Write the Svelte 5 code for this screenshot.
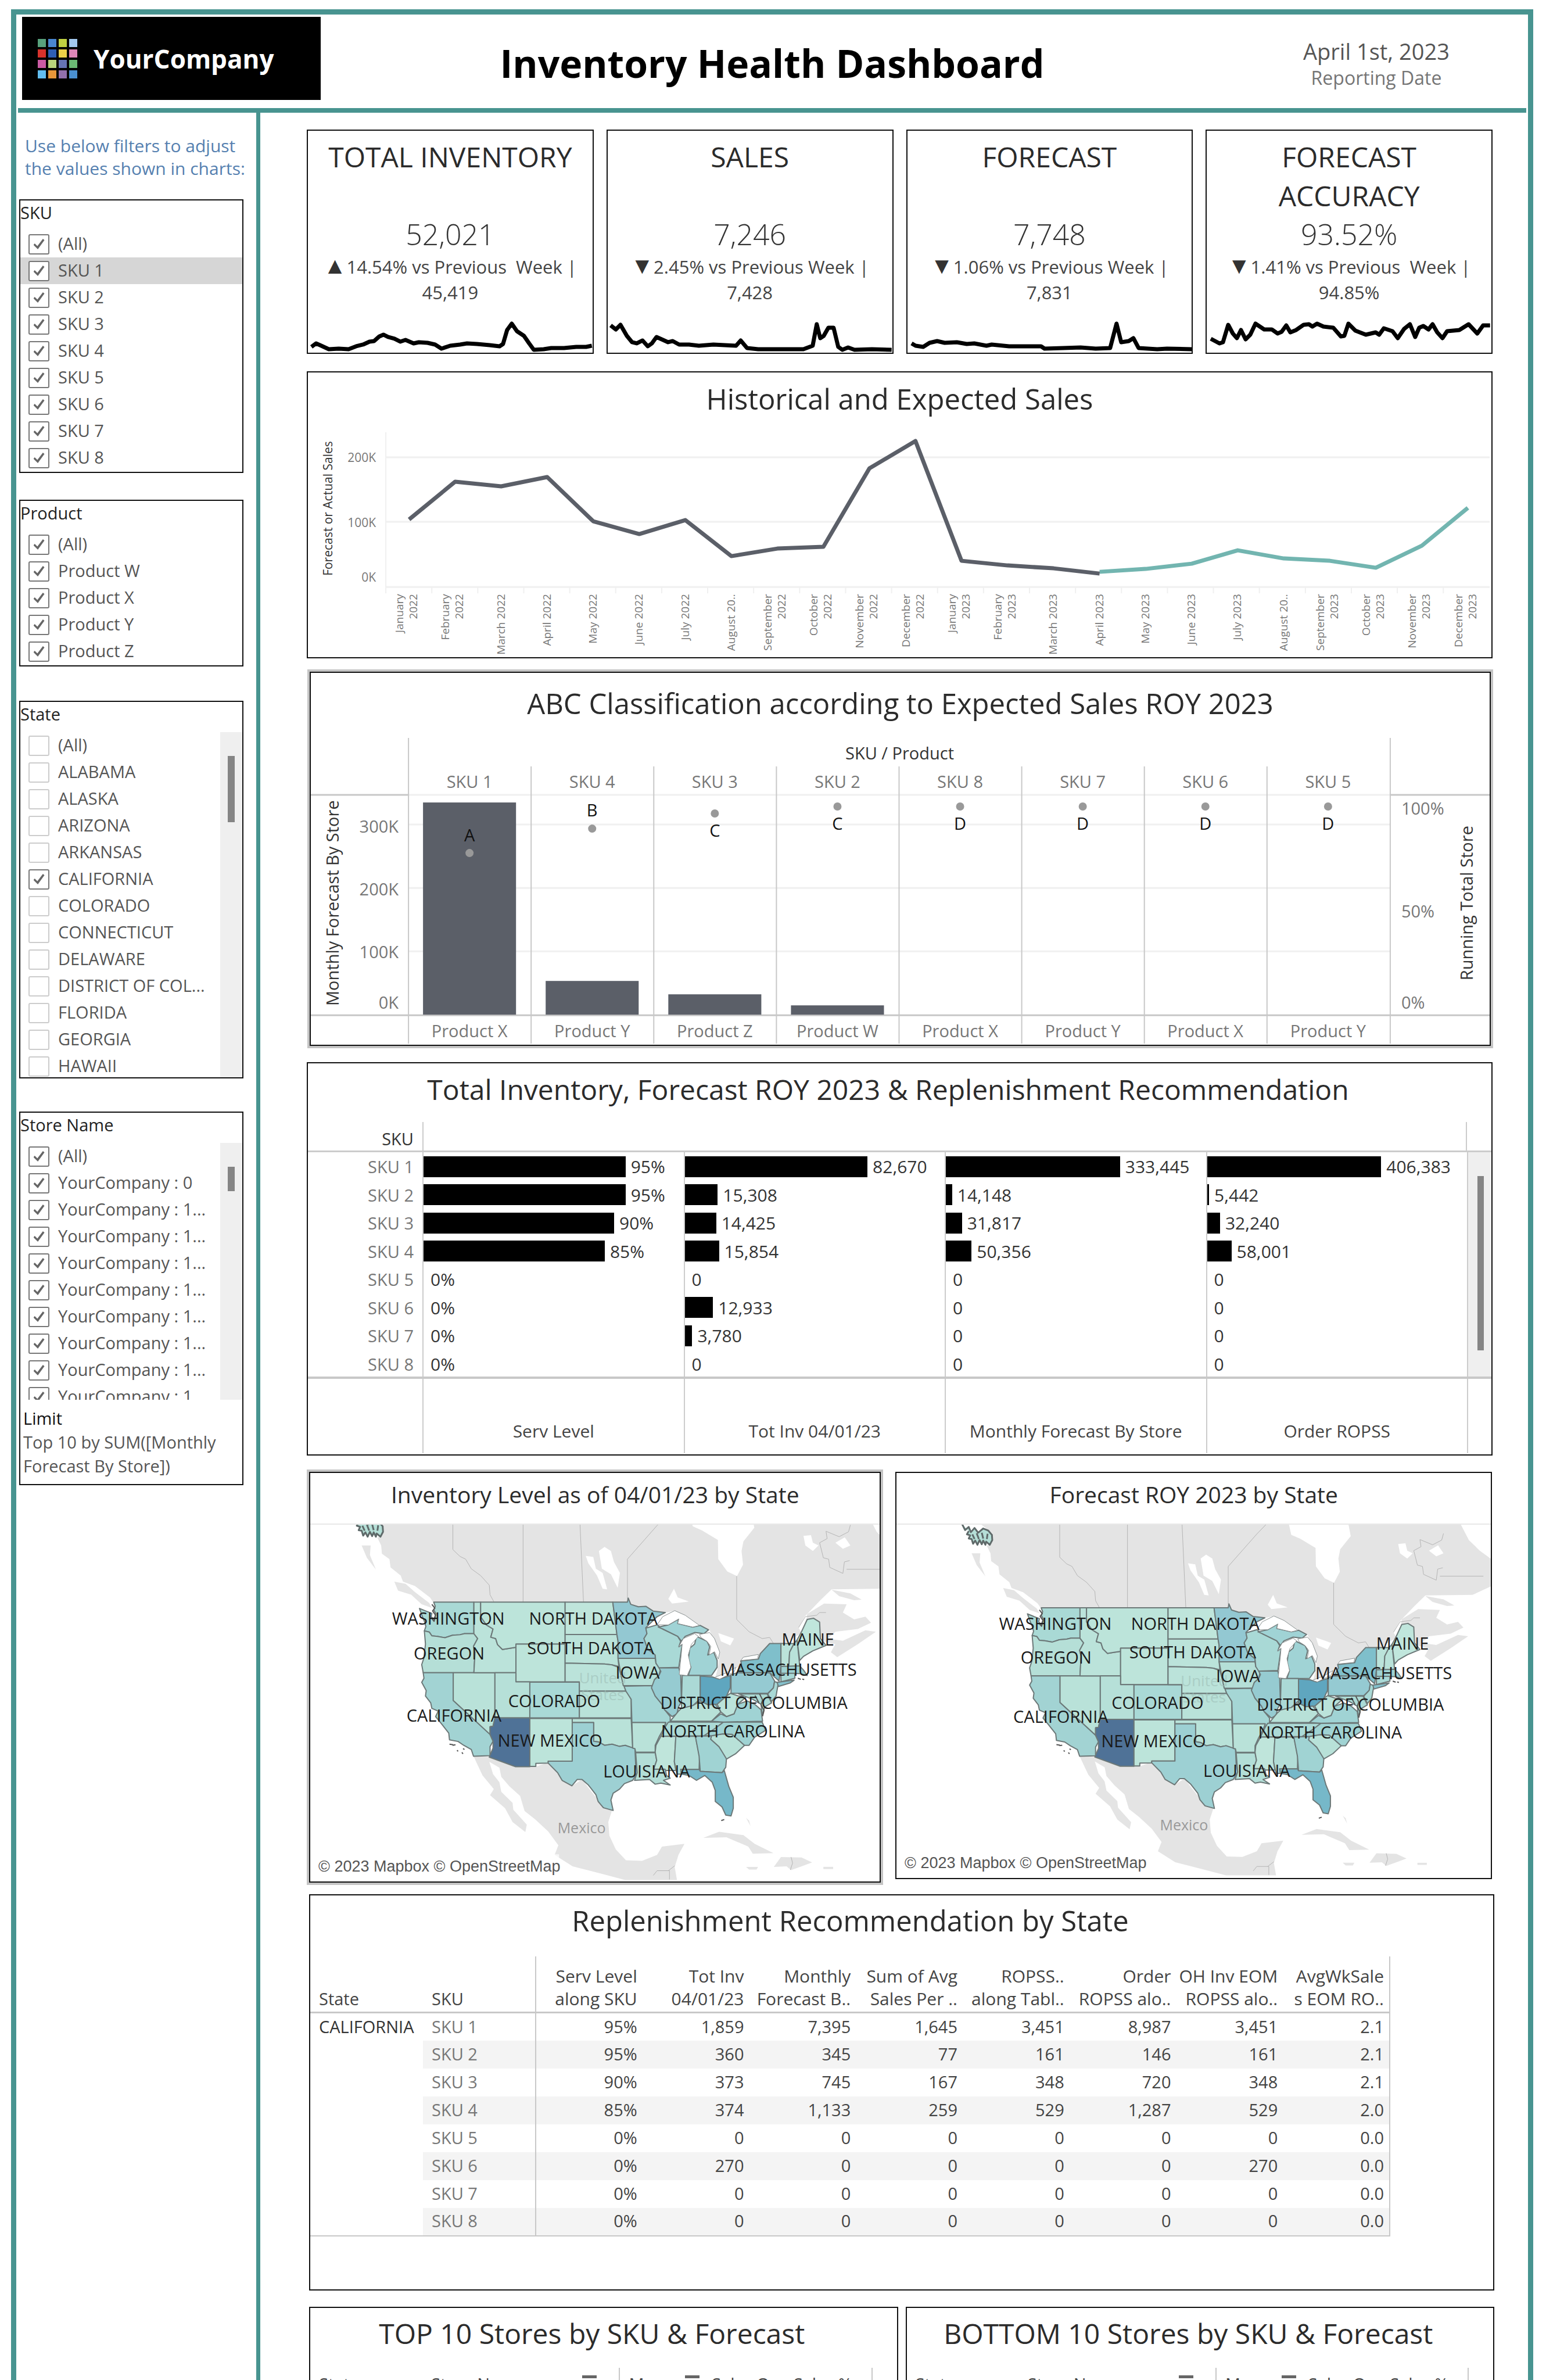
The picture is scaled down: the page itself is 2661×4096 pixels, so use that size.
<script>
  const skus = ['(All)', 'SKU 1', 'SKU 2', 'SKU 3', 'SKU 4', 'SKU 5', 'SKU 6', 'SKU 7', 'SKU 8'];
  const products = ['(All)', 'Product W', 'Product X', 'Product Y', 'Product Z'];
  const states = ['(All)', 'ALABAMA', 'ALASKA', 'ARIZONA', 'ARKANSAS', 'CALIFORNIA', 'COLORADO', 'CONNECTICUT', 'DELAWARE', 'DISTRICT OF COL...', 'FLORIDA', 'GEORGIA', 'HAWAII'];
  const stores = ['(All)', 'YourCompany : 0', ...Array(8).fill('YourCompany : 1...')];

  const filters = [
    { id: 'sku', title: 'SKU', items: skus, checked: () => true, active: 1 },
    { id: 'product', title: 'Product', items: products, checked: () => true },
    { id: 'state', title: 'State', items: states, checked: (n) => n === 'CALIFORNIA', scroll: 'tall' },
    { id: 'store', title: 'Store Name', items: stores, checked: () => true, scroll: 'short', limit: true }
  ];

  const logoColors = ['#58a07c', '#4a86d0', '#c0d042', '#a3c8ee', '#d8322c', '#2f5fb4', '#ecd048', '#de86b8', '#cb5ba4', '#b9d47c', '#6674b4', '#6bb974', '#62bdf0', '#e8963a', '#9270ac', '#4a90d0'];

  const kpis = [
    { title: 'TOTAL INVENTORY', value: '52,021', mark: '▲', change: '14.54% vs Previous\u00a0 Week |', prev: '45,419',
      line: '6,47 14,41 23,45 36,51 53,50 70,51 83,46 95,43 106,38 114,37 123,29 130,26 138,30 149,33 159,38 168,35 182,41 191,39 206,40 219,43 230,50 245,45 262,43 274,41 291,42 313,44 330,46 336,42 343,18 351,7 360,20 372,28 381,41 389,52 406,51 419,49 441,49 462,47 479,47 489,45' },
    { title: 'SALES', value: '7,246', mark: '▼', change: '2.45% vs Previous Week |', prev: '7,428',
      line: '5,10 14,17 22,9 33,28 42,39 50,41 60,36 69,46 76,41 84,30 93,34 104,39 112,37 123,43 140,43 157,45 182,43 221,45 229,36 240,49 259,51 337,51 353,45 360,8 366,32 372,28 380,14 389,14 397,47 404,52 414,48 425,52 455,51 489,52' },
    { title: 'FORECAST', value: '7,748', mark: '▼', change: '1.06% vs Previous Week |', prev: '7,831',
      line: '7,41 14,45 27,47 38,40 51,37 64,40 85,39 102,42 115,41 136,45 145,43 175,46 230,46 236,50 268,49 298,48 324,50 349,49 360,7 368,39 381,37 389,32 398,49 430,51 447,50 490,51' },
    { title: 'FORECAST ACCURACY', value: '93.52%', mark: '▼', change: '1.41% vs Previous\u00a0 Week |', prev: '94.85%',
      line: '7,33 22,41 28,39 37,9 45,24 52,32 59,18 67,34 75,26 84,7 99,17 112,17 122,24 129,21 137,10 144,22 154,18 167,9 176,8 182,12 190,7 201,12 218,14 231,29 237,28 244,7 256,19 274,26 291,22 297,26 305,15 320,20 329,32 340,16 350,8 359,30 366,14 373,11 382,17 389,8 397,22 406,32 414,20 435,18 451,8 466,24 476,10 488,10' }
  ];

  const months = [
    ['January', '2022'], ['February', '2022'], ['March 2022'], ['April 2022'], ['May 2022'], ['June 2022'], ['July 2022'], ['August 20..'],
    ['September', '2022'], ['October', '2022'], ['November', '2022'], ['December', '2022'], ['January', '2023'], ['February', '2023'],
    ['March 2023'], ['April 2023'], ['May 2023'], ['June 2023'], ['July 2023'], ['August 20..'], ['September', '2023'], ['October', '2023'],
    ['November', '2023'], ['December', '2023']
  ];
  const step = 79.2;
  const monthX = (i) => 174 + i * step;
  const past = [174, 109, 117, 101, 177, 199, 175, 237, 224, 221, 86, 39, 245, 253, 258, 267];
  const ahead = [264, 259, 250, 227, 241, 245, 257, 219, 154];
  const pastLine = past.map((y, i) => `${monthX(i)},${y}`).join(' ');
  const aheadLine = ahead.map((y, i) => `${monthX(i + 15)},${y}`).join(' ');

  const abc = [
    { sku: 'SKU 1', product: 'Product X', grade: 'A', top: 137, dot: 224, text: 194 },
    { sku: 'SKU 4', product: 'Product Y', grade: 'B', top: 444, dot: 182, text: 151 },
    { sku: 'SKU 3', product: 'Product Z', grade: 'C', top: 467, dot: 156, text: 186 },
    { sku: 'SKU 2', product: 'Product W', grade: 'C', top: 486, dot: 144, text: 174 },
    { sku: 'SKU 8', product: 'Product X', grade: 'D', dot: 144, text: 174 },
    { sku: 'SKU 7', product: 'Product Y', grade: 'D', dot: 144, text: 174 },
    { sku: 'SKU 6', product: 'Product X', grade: 'D', dot: 144, text: 174 },
    { sku: 'SKU 5', product: 'Product Y', grade: 'D', dot: 144, text: 174 }
  ];
  const abcX = (i) => 168 + i * 211;

  const measures = [
    { name: 'Serv Level', bars: [[77.7, '95%'], [77.7, '95%'], [73.3, '90%'], [69.7, '85%'], [0, '0%'], [0, '0%'], [0, '0%'], [0, '0%']] },
    { name: 'Tot Inv 04/01/23', bars: [[70.3, '82,670'], [12.7, '15,308'], [12.1, '14,425'], [13.2, '15,854'], [0, '0'], [10.9, '12,933'], [2.9, '3,780'], [0, '0']] },
    { name: 'Monthly Forecast By Store', bars: [[67, '333,445'], [2.4, '14,148'], [6.2, '31,817'], [9.9, '50,356'], [0, '0'], [0, '0'], [0, '0'], [0, '0']] },
    { name: 'Order ROPSS', bars: [[67, '406,383'], [0.8, '5,442'], [5, '32,240'], [9.4, '58,001'], [0, '0'], [0, '0'], [0, '0'], [0, '0']] }
  ];

  const regions = [
    ['#a9d9d5', '350,507 457,507 457,622 432,622 420,626 400,628 380,637 360,632 345,630 338,616 325,612 329,596 326,580 320,560 312,530 330,540 345,548 343,560 350,570 356,550 350,535 354,522'],
    ['#b5dfd7', '325,612 338,616 345,630 360,632 380,637 400,628 420,626 432,622 457,622 467,640 456,668 460,690 457,765 322,765 318,735 324,710 328,660'],
    ['#a2d3d3', '322,765 402,765 402,866 500,990 508,1015 500,1035 500,1068 456,1070 450,1045 430,1030 415,1016 392,1010 390,985 370,950 355,925 362,905 345,895 342,875 328,850 330,830 318,800 324,785'],
    ['#b9e2d9', '402,765 513,765 513,930 508,960 500,962 500,990 402,866'],
    ['#bbe3da', '457,507 475,507 475,560 490,590 508,605 502,635 515,640 520,662 533,680 550,676 569,672 569,765 457,765 460,690 456,668 467,640 457,622'],
    ['#bce4da', '475,507 700,507 700,660 569,660 569,672 550,676 533,680 520,662 515,640 502,635 508,605 490,590 475,560'],
    ['#bde4da', '569,660 700,660 700,798 569,798'],
    ['#b6e0d8', '513,765 569,765 569,798 606,798 606,930 513,930'],
    ['#a9d9d6', '606,799 738,799 738,930 606,930'],
    ['#4f7297', '513,930 606,930 606,1108 568,1108 498,1073 508,1040 508,1015 500,990 500,962 508,960'],
    ['#bce4da', '606,932 719,932 719,1088 655,1088 655,1095 622,1096 622,1107 606,1107'],
    ['#bfe5db', '700,507 827,507 832,560 838,625 700,625'],
    ['#bbe3da', '700,625 838,625 841,650 841,712 843,742 825,736 805,733 700,730'],
    ['#bbe3da', '700,730 805,733 825,736 843,745 850,780 857,812 862,832 738,832 738,798 700,798'],
    ['#b9e2d9', '738,832 862,832 868,842 876,862 876,930 738,930'],
    ['#b9e2d9', '719,932 876,932 878,985 880,1040 860,1030 845,1034 825,1026 805,1030 790,1018 776,1015 776,947 719,947'],
    ['#9dd0d3', '719,947 776,947 776,1015 790,1018 805,1030 825,1026 845,1034 860,1030 886,1042 888,1100 892,1130 880,1158 858,1170 845,1190 828,1205 822,1230 828,1268 802,1258 788,1235 782,1210 762,1175 745,1155 732,1155 718,1178 692,1158 680,1130 655,1095 655,1088 719,1088'],
    ['#93c8d2', '827,507 866,507 868,492 875,515 895,524 915,522 935,540 967,545 945,560 930,580 915,600 918,622 910,640 920,678 940,700 940,712 841,712 841,650 838,625 832,560'],
    ['#b5dfd7', '841,712 940,712 942,730 955,745 950,775 938,790 935,812 855,812 850,780'],
    ['#a5d6d5', '857,814 930,812 940,850 958,880 965,900 980,925 980,950 966,960 968,947 878,947 876,862 862,832'],
    ['#b9e2d9', '878,947 968,947 962,970 950,1000 940,1030 940,1055 888,1055 886,1042 880,1040'],
    ['#b3ded7', '888,1057 940,1057 944,1085 936,1117 967,1117 970,1140 980,1150 962,1158 980,1175 955,1168 940,1172 925,1155 885,1158 892,1130'],
    ['#a9d9d6', '915,602 945,590 960,605 1000,632 1008,650 1003,670 1012,660 1003,745 950,747 942,730 940,700 920,678 910,640 918,622'],
    ['#a0d3d5', '948,598 975,590 1003,568 1000,585 1040,598 1060,592 1082,608 1070,622 1045,618 1020,632 1010,650 1000,632 960,605'],
    ['#a0d3d5', '1028,775 1090,775 1105,745 1105,720 1096,690 1080,700 1085,670 1078,650 1050,632 1045,660 1032,675 1028,720 1035,745'],
    ['#96cbd1', '950,747 1003,747 1008,775 1010,870 1002,890 998,915 985,925 965,900 958,880 940,850 930,820 938,790 950,775 955,760'],
    ['#abd9d6', '1012,775 1060,775 1060,860 1040,885 1010,895 1010,870'],
    ['#5fa6bf', '1060,777 1092,780 1110,788 1140,775 1140,820 1130,850 1105,880 1080,882 1060,868'],
    ['#b8e1d8', '980,942 1002,905 1010,895 1040,885 1060,868 1080,882 1100,880 1115,908 1090,942'],
    ['#acdad6', '975,945 1122,945 1100,968 1070,995 955,997 968,960'],
    ['#bfe5db', '955,997 995,997 991,1090 995,1122 968,1122 966,1117 936,1117 944,1085 940,1055 942,1030'],
    ['#b2ddd7', '995,997 1047,997 1058,1070 1057,1118 1008,1118 1010,1135 998,1135 991,1090'],
    ['#a0d3d3', '1047,997 1090,995 1088,1008 1110,1035 1130,1075 1128,1110 1118,1130 1060,1125 1057,1070'],
    ['#76b8c9', '1008,1118 1057,1118 1060,1125 1118,1130 1124,1122 1136,1180 1148,1220 1148,1260 1142,1288 1128,1285 1118,1255 1100,1235 1100,1195 1092,1165 1072,1140 1050,1158 1030,1140 1010,1135'],
    ['#b8e1d8', '1090,995 1120,988 1145,990 1178,1030 1155,1060 1130,1080 1110,1035 1088,1008'],
    ['#a0d3d3', '1070,995 1100,968 1122,945 1225,945 1234,975 1205,1000 1190,1030 1178,1030 1145,990 1120,988 1090,995'],
    ['#a0d3d4', '1090,942 1115,915 1130,925 1150,915 1160,880 1185,868 1205,880 1222,900 1226,942 1122,945'],
    ['#bbe3da', '1105,880 1130,850 1140,840 1162,850 1185,850 1160,880 1150,915 1130,925 1115,908'],
    ['#95cad2', '1142,772 1158,765 1245,765 1258,795 1255,820 1240,840 1142,840'],
    ['#7fbfcb', '1158,765 1170,735 1168,722 1215,715 1220,695 1245,658 1275,658 1275,740 1270,795 1245,765'],
    ['#a9d9d6', '1258,797 1268,802 1262,850 1250,870 1240,842 1255,820'],
    ['#abdad5', '1162,842 1238,842 1250,875 1232,890 1225,920 1222,880 1200,862'],
    ['#bbe3da', '1275,658 1310,658 1298,690 1296,742 1275,742'],
    ['#b9e2d9', '1310,658 1318,645 1325,740 1296,742 1298,690'],
    ['#c0e6dc', '1318,645 1328,620 1345,570 1362,566 1378,580 1380,640 1395,665 1360,685 1335,705 1325,720'],
    ['#9ed2d3', '1275,742 1325,740 1335,755 1345,775 1325,768 1275,767'],
    ['#a9d9d6', '1275,767 1312,767 1312,785 1275,798'],
    ['#84c1cd', '1265,800 1310,792 1300,802 1268,815']
  ];
  const lakes = [
    '945,590 960,560 992,538 1020,555 1058,592 1040,598 1000,585 1003,568 975,590',
    '1004,772 1010,690 1012,660 1003,670 1015,640 1045,622 1055,632 1036,662 1028,700 1035,745 1025,775',
    '1058,625 1085,618 1098,640 1112,690 1108,715 1098,688 1084,700 1088,668 1078,650 1062,636',
    '1098,782 1130,765 1155,745 1150,762 1112,788',
    '1168,720 1175,708 1215,698 1213,714'
  ];
  const land = [
    'M165,170 L215,224 L214,260 L200,272 L210,300 L212,330 L232,350 L235,380 L262,410 L268,432 L300,448 L340,490 L350,510 H868 L900,530 L970,545 L992,538 L1058,592 L1085,610 L1112,690 L1108,740 L1100,785 L1160,745 L1220,700 L1280,662 L1330,620 L1322,600 L1338,560 L1380,500 L1410,460 L1540,458 L1600,420 V170 H1195 L1204,235 L1175,285 L1170,320 L1174,370 L1158,412 L1132,395 L1108,350 L1107,280 L1065,245 L1040,230 L1030,170 Z',
    'M245,432 L275,440 L300,470 L338,510 L345,528 L318,515 L290,480 L255,465 Z',
    'M158,300 H182 L180,335 L196,388 L172,345 Z',
    'M1340,600 L1345,550 L1390,512 L1450,515 L1440,545 L1470,570 L1500,560 L1515,582 L1480,605 L1420,615 L1400,640 L1440,648 L1500,610 L1528,615 L1480,660 L1425,708 L1408,690 L1420,660 L1385,650 L1375,600 Z',
    'M1410,462 L1460,475 L1490,498 L1470,500 L1430,485 Z',
    'M456,1070 L500,1072 L568,1108 H622 L655,1092 L690,1150 L718,1178 L745,1155 L785,1225 L825,1268 L815,1310 L818,1360 L835,1410 L862,1450 L905,1452 L945,1430 L958,1400 L1018,1390 L1002,1430 L992,1475 L998,1522 H860 L800,1500 L720,1472 L672,1430 L682,1395 L655,1345 L620,1300 L592,1270 L580,1215 L552,1180 L530,1145 L525,1112 L498,1090 L508,1135 L525,1165 L530,1200 L560,1240 L562,1265 L598,1320 L594,1347 L560,1310 L540,1260 L500,1212 L510,1190 L480,1140 Z',
    'M1068,1368 L1110,1346 L1175,1358 L1205,1390 L1255,1424 L1200,1426 L1188,1400 L1130,1366 Z',
    'M1256,1474 L1275,1438 L1330,1440 L1358,1458 L1330,1472 L1302,1486 L1290,1472 Z',
    'M1182,1474 H1214 L1210,1484 H1190 Z',
    'M1388,1474 H1414 V1482 H1388 Z',
    'M1182,1295 L1194,1325 L1190,1305 Z'
  ];
  const water = [
    'M790,320 L805,305 L822,320 L830,360 L846,400 L840,455 L822,405 L798,385 Z',
    'M755,338 L775,342 L782,385 L800,400 L812,460 L800,458 L785,410 L762,365 Z',
    'M975,495 L990,458 L1000,490 L1030,505 L985,512 Z',
    'M1335,265 L1355,262 L1360,290 L1375,300 L1360,320 L1340,300 Z',
    'M1420,290 L1445,270 L1460,300 L1440,312 Z',
    'M1500,170 H1600 V330 L1560,290 L1530,250 Z',
    'M1108,620 L1150,640 L1140,665 L1115,650 Z'
  ];
  const borders = [
    'M401,170 V315 L420,340 L435,350 L450,385 L475,410 L498,445 L500,480 L510,505', 'M588,170 V507', 'M738,170 L749,507', 'M985,170 L945,227 L866,350 V495',
    'M1157,412 V570 L1190,615 L1225,640 L1245,636 L1255,658', 'M1460,225 L1455,250 L1430,268 L1395,248 L1398,275 L1378,290 L1388,345 L1402,350 L1405,380 L1440,402 L1444,360 L1458,355',
    'M1450,387 H1570', 'M1322,600 L1340,560 L1370,555 L1378,545 L1395,545', 'M1302,1438 L1306,1460 L1300,1485', 'M935,1505 L945,1488 H978 V1520 M975,1488 L992,1470'
  ];
  const islands = 'M132,190 L140,212 L150,200 L156,220 L166,204 L176,222 L190,206 L204,214 L214,230 L215,250 L208,268 L198,256 L196,268 L190,252 L186,266 L180,250 L174,268 L168,252 L162,264 L158,246 L150,244 L154,232 L145,228 L150,216 M160,228 L166,246 M172,224 L178,246 M186,222 L190,244 M202,226 L200,246';
  const shores = 'M392,1026 l10,2 M400,1030 l8,-2 M412,1048 l3,4 M425,1056 l3,5 M428,1042 l4,3 M1116,1305 l8,-4 M1320,785 l8,4 M1332,788 l5,2 M345,515 l8,14 l-6,10 l8,16 l-4,22 l-6,-10 M1218,842 l8,22 l-4,18 l8,20 l-4,22 M1206,848 l10,26';
  const places = [
    ['WASHINGTON', 389, 571], ['NORTH DAKOTA', 775, 571], ['OREGON', 391, 698], ['SOUTH DAKOTA', 768, 678], ['IOWA', 893, 768], ['COLORADO', 671, 871],
    ['CALIFORNIA', 404, 924], ['NEW MEXICO', 660, 1015], ['LOUISIANA', 917, 1129], ['MAINE', 1347, 646], ['MASSACHUSETTS', 1295, 757],
    ['DISTRICT OF COLUMBIA', 1203, 877], ['NORTH CAROLINA', 1147, 982]
  ];
  const maps = [
    { id: 'inv', title: 'Inventory Level as of 04/01/23 by State', w: 980, h: 613, sx: 0.6458, sy: 0.4709, dx: -13.6, dy: -105.5 },
    { id: 'fc', title: 'Forecast ROY 2023 by State', w: 1022, h: 607, sx: 0.6235, sy: 0.4535, dx: 30.8, dy: -86.9 }
  ];

  const columns = [
    ['Serv Level', 'along SKU'], ['Tot Inv', '04/01/23'], ['Monthly', 'Forecast B..'], ['Sum of Avg', 'Sales Per ..'],
    ['ROPSS..', 'along Tabl..'], ['Order', 'ROPSS alo..'], ['OH Inv EOM', 'ROPSS alo..'], ['AvgWkSale', 's EOM RO..']
  ];
  const rows = [
    ['95%', '1,859', '7,395', '1,645', '3,451', '8,987', '3,451', '2.1'],
    ['95%', '360', '345', '77', '161', '146', '161', '2.1'],
    ['90%', '373', '745', '167', '348', '720', '348', '2.1'],
    ['85%', '374', '1,133', '259', '529', '1,287', '529', '2.0'],
    ['0%', '0', '0', '0', '0', '0', '0', '0.0'],
    ['0%', '270', '0', '0', '0', '0', '270', '0.0'],
    ['0%', '0', '0', '0', '0', '0', '0', '0.0'],
    ['0%', '0', '0', '0', '0', '0', '0', '0.0']
  ];
  const rankings = ['TOP 10 Stores by SKU & Forecast', 'BOTTOM 10 Stores by SKU & Forecast'];
</script>

<div class="page">
  <div class="frame">
    <header class="head">
      <div class="logo">
        <div class="tiles">
          {#each logoColors as c}<i style:background={c}></i>{/each}
        </div>
        <span>YourCompany</span>
      </div>
      <h1>Inventory Health Dashboard</h1>
      <div class="date">
        <strong>April 1st, 2023</strong>
        <span>Reporting Date</span>
      </div>
    </header>

    <div class="body">
      <aside class="side">
        <p class="hint">Use below filters to adjust<br />the values shown in charts:</p>
        {#each filters as f}
          <fieldset class="filter {f.id}">
            <div class="filter-title">{f.title}</div>
            <div class="list {f.scroll ?? ''}">
              <div class="options">
                {#each f.items as item, i}
                  <label class:active={f.active === i}>
                    <input type="checkbox" checked={f.checked(item)} />
                    <span>{item}</span>
                  </label>
                {/each}
              </div>
              {#if f.scroll}<div class="track"><i></i></div>{/if}
            </div>
            {#if f.limit}
              <p class="limit"><b>Limit</b><br />Top 10 by SUM([Monthly Forecast By Store])</p>
            {/if}
          </fieldset>
        {/each}
      </aside>

      <main class="main">
        <div class="kpis">
          {#each kpis as k}
            <section class="kpi">
              <h2>{k.title}</h2>
              <div class="value">{k.value}</div>
              <p><span class="mark">{k.mark}</span>{k.change}<br />{k.prev}</p>
              <svg viewBox="0 0 490 57"><polyline points={k.line} /></svg>
            </section>
          {/each}
        </div>

        <section class="panel history">
          <h2>Historical and Expected Sales</h2>
          <svg viewBox="0 0 2036 411">
            <g class="soft">
              <path d="M134,24 V290" />
              <path class="thick" d="M134,67 H2033 M134,178 H2033 M134,290 H2033" />
              {#each Array(24) as _, i}<path d="M{134 + i * 79.1},290 V301" />{/each}
            </g>
            <polyline class="ahead" points={aheadLine} />
            <polyline class="past" points={pastLine} />
            <g class="tick end">
              <text x="117" y="75">200K</text>
              <text x="117" y="187">100K</text>
              <text x="117" y="281">0K</text>
            </g>
            <text class="axis small" transform="translate(42,155) rotate(-90)">Forecast or Actual Sales</text>
            <g class="month">
              {#each months as m, i}
                {#each m as part, j}
                  <text transform="translate({monthX(i) + (m.length === 1 ? 6 : j === 0 ? -10 : 14)},302) rotate(-90)">{part}</text>
                {/each}
              {/each}
            </g>
          </svg>
        </section>

        <section class="panel abc glow">
          <h2>ABC Classification according to Expected Sales ROY 2023</h2>
          <svg viewBox="0 0 2028 554">
            <g class="soft"><path class="thick" d="M168,175 H1857 M168,284 H1857 M168,393 H1857 M168,124 H1857" /></g>
            <g class="rule">
              <path class="thick" d="M0,124 H168 M1857,124 H2028 M0,503 H2028" />
              <path d="M168,26 V552 M1857,26 V552" />
              {#each Array(7) as _, i}<path d="M{abcX(i + 1)},75 V552" />{/each}
            </g>
            {#each abc as a, i}
              {@const c = abcX(i) + 105}
              {#if a.top}<rect x={c - 80} y={a.top} width="160" height={502 - a.top} fill="#5b5f68" />{/if}
              <circle cx={c} cy={a.dot} r="7" fill="#999" />
              <text class="grade" x={c} y={a.text + 10}>{a.grade}</text>
              <text class="tick" x={c} y="112">{a.sku}</text>
              <text class="tick" x={c} y="541">{a.product}</text>
            {/each}
            <text class="axis" x="1013" y="63">SKU&#160;/&#160;Product</text>
            <g class="tick end">
              <text x="151" y="189">300K</text>
              <text x="151" y="297">200K</text>
              <text x="151" y="405">100K</text>
              <text x="151" y="492">0K</text>
            </g>
            <g class="tick start">
              <text x="1876" y="158">100%</text>
              <text x="1876" y="335">50%</text>
              <text x="1876" y="492">0%</text>
            </g>
            <text class="axis" transform="translate(48,310) rotate(-90)">Monthly Forecast By Store</text>
            <text class="axis" transform="translate(1999,310) rotate(-90)">Running Total Store</text>
          </svg>
        </section>

        <section class="panel inventory">
          <h2>Total Inventory, Forecast ROY 2023 &amp; Replenishment Recommendation</h2>
          <div class="bars-head"><span>SKU</span><i></i></div>
          <div class="bars-body">
            <div class="names">{#each skus.slice(1) as s}<span>{s}</span>{/each}</div>
            {#each measures as m}
              <div class="measure">
                {#each m.bars as [w, label]}
                  <div class="bar"><i style:width="{w}%"></i><span class:zero={w === 0}>{label}</span></div>
                {/each}
              </div>
            {/each}
            <div class="track"><i></i></div>
          </div>
          <div class="bars-foot">
            <span></span>
            {#each measures as m}<span>{m.name}</span>{/each}
            <span></span>
          </div>
        </section>

        <div class="maps">
          {#each maps as m}
            <section class="panel map {m.id}" class:glow={m.id === 'inv'}>
              <h3>{m.title}</h3>
              <svg viewBox="0 0 {m.w} {m.h}">
                <g transform="matrix({m.sx},0,0,{m.sy},{m.dx},{m.dy})">
                  {#each land as d}<path class="land" {d} />{/each}
                  {#each water as d}<path class="water" {d} />{/each}
                  {#each borders as d}<path class="border" {d} />{/each}
                  {#each regions as [fill, points]}<polygon class="region" {fill} {points} />{/each}
                  {#each lakes as points}<polygon class="lake" {points} />{/each}
                  <path class="isles" d={islands} />
                  <path class="shore" d={shores} />
                </g>
                <g class="faint">
                  <text x={800 * m.sx + m.dx} y={785 * m.sy + m.dy + 9}>United</text>
                  <text x={800 * m.sx + m.dx} y={847 * m.sy + m.dy + 9}>States</text>
                </g>
                <text class="country" x={744 * m.sx + m.dx} y={1334 * m.sy + m.dy + 8}>Mexico</text>
                {#each places as [name, u, v]}
                  <text class="place" x={u * m.sx + m.dx} y={v * m.sy + m.dy + 9}>{name}</text>
                {/each}
                <rect x="8" y={m.h - 46} width="420" height="36" fill="#fff" opacity="0.7" />
                <text class="credit" x="14" y={m.h - 16}>© 2023 Mapbox © OpenStreetMap</text>
              </svg>
            </section>
          {/each}
        </div>

        <section class="panel lower states">
          <div class="inset">
            <h2>Replenishment Recommendation by State</h2>
            <table>
              <thead>
                <tr>
                  <th class="left">State</th>
                  <th class="left">SKU</th>
                  {#each columns as [a, b]}<th>{a}<br />{b}</th>{/each}
                </tr>
              </thead>
              <tbody>
                {#each rows as r, i}
                  <tr>
                    {#if i === 0}<th class="left region-name" rowspan="8">CALIFORNIA</th>{/if}
                    <td class="left sku-name">{skus[i + 1]}</td>
                    {#each r as v}<td>{v}</td>{/each}
                  </tr>
                {/each}
              </tbody>
            </table>
          </div>
        </section>

        <div class="ranks lower">
          {#each rankings as title}
            <section class="panel rank">
              <h2>{title}</h2>
              <div class="rank-head">
                <span>State</span>
                <span class="with-sort">Store Name<i></i></span>
                <span class="ruled with-sort">Mo..<i></i></span>
                <span>Sales Qu</span>
                <span>Sales %</span>
                <span class="ruled"></span>
              </div>
            </section>
          {/each}
        </div>
      </main>
    </div>
  </div>
</div>

<style>
  :global(body) {
    background: #fff;
    font-family: 'Open Sans', 'Noto Sans', sans-serif;
    font-size: 29px;
    color: #444;
  }
  h1, h2, h3, p, fieldset { margin: 0; padding: 0; }
  h1, h2, h3, th { font-weight: 400; }
  * { box-sizing: border-box; }
  svg { display: block; width: 100%; }

  .page { height: 100vh; overflow: hidden; padding: 16px 22px 0 19px; }
  .frame {
    min-height: 100%;
    border: 9px solid #489490;
    border-bottom: 0;
    display: flex;
    flex-direction: column;
  }

  .head {
    display: grid;
    grid-template-columns: 514px 1fr 514px;
    align-items: center;
    height: 169px;
    margin: 0 3px;
    padding: 4px 7px 14px;
    border-bottom: 8px solid #489490;
  }
  .logo {
    height: 143px;
    background: #000;
    display: flex;
    align-items: center;
    gap: 28px;
    padding-left: 27px;
    color: #fff;
    font-size: 44px;
    font-weight: 700;
  }
  .tiles { display: grid; grid-template-columns: repeat(4, 14px); gap: 4px; }
  .tiles i { height: 14px; }
  h1 { font-size: 66px; font-weight: 700; color: #000; text-align: center; padding-top: 14px; line-height: 80px; }
  .date { display: flex; flex-direction: column; align-items: center; line-height: 46px; padding: 20px 0 0 12px; color: #757575; font-size: 32px; }
  .date strong { font-size: 38px; font-weight: 400; color: #555; }

  .body { flex: 1; display: flex; }
  .side {
    flex: none;
    width: 420px;
    border-right: 7px solid #489490;
    padding: 37px 22px 0 5px;
  }
  .hint { color: #5580b0; font-size: 30px; line-height: 39px; padding-left: 10px; margin-bottom: 34px; white-space: nowrap; }
  .filter { border: 2px solid #111; margin-bottom: 46px; min-width: 0; }
  .filter.product { margin-bottom: 59px; }
  .filter.state { margin-bottom: 57px; }
  .filter-title { line-height: 42px; padding: 0 0 10px 0; color: #222; }
  .list { display: flex; padding-bottom: 1px; }
  .options { flex: 1; min-width: 0; }
  .list.tall { height: 594px; overflow: hidden; padding: 0; }
  .list.short { height: 442px; overflow: hidden; padding: 0; }
  .filter label { display: flex; align-items: center; gap: 15px; height: 46px; padding-left: 14px; color: #555; white-space: nowrap; }
  .filter label span { line-height: 40px; padding-bottom: 2px; }
  .filter label.active { background: #d6d6d6; }
  input {
    appearance: none;
    flex: none;
    width: 36px;
    height: 35px;
    margin: 0;
    background: #fff;
    border: 2px solid #ccc;
    border-radius: 3px;
    display: grid;
    place-items: center;
  }
  input:checked { border-color: #777; }
  input:checked::before {
    content: '';
    width: 19px;
    height: 18px;
    background: #666;
    clip-path: polygon(0 58%, 12% 44%, 36% 70%, 86% 0, 100% 12%, 40% 100%);
  }
  .track { flex: none; width: 38px; background: #efefef; }
  .track i { display: block; background: #858585; }
  .side .track i { width: 12px; margin: 41px 0 0 13px; height: 114px; }
  .side .short .track i { height: 42px; }
  .limit { padding: 11px 0 11px 5px; line-height: 41px; color: #555; }
  .limit b { font-weight: 400; color: #111; }

  .main { flex: 1; min-width: 0; padding: 29px 61px 0 80px; }
  .kpis { display: grid; grid-template-columns: repeat(4, 1fr); gap: 22px; }
  .kpi {
    border: 2px solid #111;
    height: 386px;
    padding-top: 11px;
    display: flex;
    flex-direction: column;
    align-items: center;
    text-align: center;
  }
  h2 { font-size: 49px; line-height: 68px; color: #2b2b2b; text-align: center; }
  .kpi h2 { font-size: 48px; line-height: 67px; height: 134px; padding: 0 20px; }
  .value { font-size: 50px; font-weight: 300; line-height: 67px; color: #333; }
  .kpi p { line-height: 44px; font-size: 31px; color: #444; white-space: nowrap; }
  .mark { color: #333; font-size: 40px; line-height: 30px; }
  .kpi svg { margin-top: auto; }
  .kpi polyline { fill: none; stroke: #000; stroke-width: 7; stroke-linejoin: round; }

  .panel { border: 2px solid #111; background: #fff; }
  .glow { box-shadow: 0 0 0 4px #c4c4c4; }
  .history { margin-top: 30px; padding-top: 11px; }
  .abc { margin: 23px 3px 0 5px; padding-top: 18px; }
  .inventory { margin-top: 28px; padding-top: 11px; font-size: 30px; }
  .inventory h2 { padding: 0 40px 2px 0; font-size: 48px; }

  text { fill: #444; text-anchor: middle; font-size: 29px; }
  .soft path { stroke: #f0f0f0; stroke-width: 2; fill: none; }
  .rule path { stroke: #c8c8c8; stroke-width: 2; fill: none; }
  .soft .thick, .rule .thick { stroke-width: 3; }
  .past, .ahead { fill: none; stroke: #5b5f68; stroke-width: 7; stroke-linejoin: round; }
  .ahead { stroke: #72b5b0; }
  .tick, .tick text { fill: #777; }
  .end text, .month text { text-anchor: end; }
  .start text { text-anchor: start; }
  .history .tick text, .history .small { font-size: 21px; }
  .month text { font-size: 19px; fill: #777; }
  .axis { fill: #333; }
  .grade { fill: #111; }

  .bars-head, .bars-body, .bars-foot {
    display: grid;
    grid-template-columns: 197px repeat(4, 1fr) 42px;
  }
  .bars-head { height: 72px; border-bottom: 3px solid #ccc; align-items: end; }
  .bars-head span { text-align: right; padding-right: 15px; line-height: 40px; color: #333; font-size: 29px; }
  .bars-head i { grid-column: 2 / 6; height: 49px; border: solid #ccc; border-width: 0 2px; }
  .bars-body { height: 386px; overflow: hidden; }
  .names, .measure { height: 388px; display: grid; grid-auto-rows: 1fr; align-items: center; }
  .names { text-align: right; padding-right: 15px; color: #777; font-size: 29px; }
  .measure { border-left: 2px solid #ccc; }
  .bar { display: flex; align-items: center; gap: 9px; color: #333; }
  .bar i { height: 36px; background: #000; }
  .bar .zero { padding-left: 3px; }
  .bars-body .track { width: 42px; border-left: 2px solid #ccc; }
  .bars-body .track i { width: 11px; height: 300px; margin: 41px 0 0 16px; }
  .bars-foot { height: 134px; border-top: 4px solid #c8c8c8; padding-bottom: 2px; }
  .bars-foot span { border-left: 2px solid #ccc; padding-top: 67px; text-align: center; line-height: 46px; }
  .bars-foot span:first-child { border: 0; }

  .maps { display: grid; grid-template-columns: 984fr 1026fr; gap: 25px; align-items: start; margin: 28px 1px 0 4px; }
  h3 { font-size: 39px; line-height: 54px; padding: 10px 0 23px; color: #2b2b2b; text-align: center; border-bottom: 2px solid #e8e8e8; }
  .map svg { overflow: hidden; }
  .land { fill: #e4e4e4; }
  .water, .lake { fill: #fff; }
  .border, .isles, .region, .lake, .shore { vector-effect: non-scaling-stroke; stroke-linejoin: round; }
  .border { fill: none; stroke: #b4b4b4; stroke-width: 1; }
  .region { stroke: #6c7878; stroke-width: 2; }
  .lake { stroke: #8a9292; stroke-width: 1; }
  .isles { fill: #b5dfd7; stroke: #5f6a6a; stroke-width: 3; }
  .shore { fill: none; stroke: #555; stroke-width: 2; }
  .place { fill: #1a1a1a; }
  .faint text { fill: #9fc0b8; opacity: 0.6; font-size: 26px; }
  .country { fill: #999; font-size: 25px; }
  .credit { font-family: 'Liberation Sans', sans-serif; font-size: 27px; fill: #555; text-anchor: start; }

  .lower { margin-left: 4px; margin-right: -3px; }
  .states { margin-top: 20px; padding: 9px 177px 91px 0; }
  table { width: 100%; table-layout: fixed; border-collapse: collapse; margin-top: 28px; border-bottom: 2px solid #c8c8c8; }
  th, td { padding: 0 9px 3px 0; text-align: right; line-height: 39px; white-space: nowrap; }
  thead tr { height: 97px; border-bottom: 3px solid #c8c8c8; }
  thead th { vertical-align: bottom; color: #444; }
  thead th:not(.left) { font-size: 30px; }
  tbody tr { height: 48px; }
  th.left, td.left { text-align: left; padding-left: 15px; }
  th.left { width: 194px; padding-right: 0; }
  th:nth-child(3), td:nth-last-child(8) { border-left: 2px solid #c8c8c8; }
  th:last-child, td:last-child { border-right: 2px solid #c8c8c8; }
  th.region-name { vertical-align: top; padding-top: 3px; color: #333; border: 0; }
  td.sku-name { color: #777; }
  tbody tr:nth-child(even) td { background: #f4f4f4; }

  .ranks { display: grid; grid-template-columns: 1fr 1fr; gap: 13px; margin-top: 28px; }
  .rank { padding-top: 10px; height: 400px; }
  .rank h2 { padding-right: 40px; font-size: 48px; }
  .rank-head { display: grid; grid-template-columns: 193px 339fr 145fr 141fr 149fr 44fr; margin-top: 25px; }
  .rank-head span { padding: 8px 0 0 15px; line-height: 39px; white-space: nowrap; }
  .rank-head .ruled { border-left: 2px solid #c8c8c8; }
  .with-sort { display: flex; justify-content: space-between; }
  .with-sort i { width: 25px; height: 5px; margin: 5px 38px 0 0; background: #666; }
  .ruled.with-sort i { margin-right: 6px; }
</style>
